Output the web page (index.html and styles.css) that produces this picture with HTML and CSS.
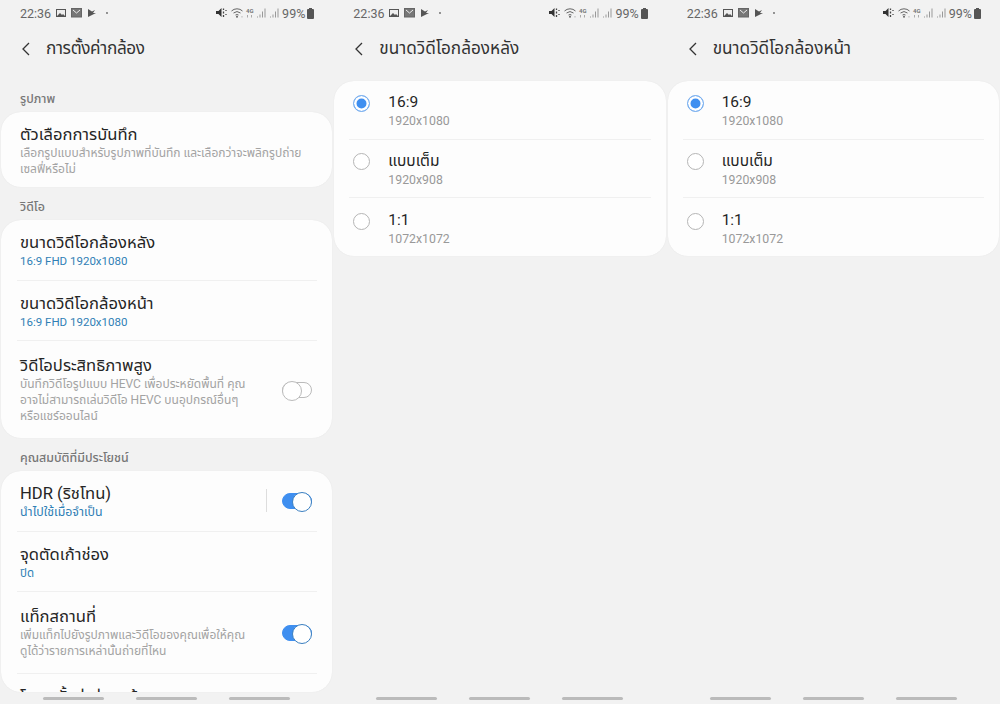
FILE: index.html
```html
<!DOCTYPE html>
<html lang="th">
<head>
    <meta charset="UTF-8">
    <title>การตั้งค่ากล้อง</title>
    <link rel="stylesheet" href="styles.css">
</head>
<body>
    <svg class="defs" width="0" height="0">
        <symbol id="ic-left" viewBox="0 0 54 10">
            <rect x="0.500" y="1.500" width="9" height="7" fill="#eee" stroke="#555"/>
            <path d="M1 8l3-3 2 2 1-1 2 2z" fill="#555"/>
            <rect x="15.500" y="0.500" width="10" height="8.500" fill="#777" stroke="#666"/>
            <path d="M17 2l3.500 3L24 2" fill="none" stroke="#eee"/>
            <path d="M32 1l4 2.500 3-1.500-2 3 3 0-8 4z" fill="#555"/>
            <circle cx="51" cy="5" r="0.900" fill="#666"/>
        </symbol>
        <symbol id="ic-right" viewBox="0 0 64 12">
            <path d="M0 4h2.500l3-3v9l-3-3H0z" fill="#333"/>
            <path d="M7.500 1.500v1.500M7.500 4.500v2M7.500 8v2M10 3v1M10 7v1" stroke="#444" stroke-width="1.300"/>
            <path d="M15.500 4a8 8 0 0 1 11 0M17.500 6a5.500 5.500 0 0 1 7 0M19.500 8a3 3 0 0 1 3 0" fill="none" stroke="#666"/>
            <circle cx="21" cy="9.800" r="1" fill="#666"/>
            <circle cx="26" cy="9.800" r="0.600" fill="#999"/>
            <text x="30" y="6" class="tiny">4G</text>
            <path d="M31.500 8v2.500M35.500 8v2.500" stroke="#aaa"/>
            <path d="M41.500 9.500v1M44 7.500v3M46.500 4.500v6M49 1.500v9M54.500 9.500v1M57 7.500v3M59.500 4.500v6M62 1.500v9" stroke="#999"/>
        </symbol>
        <symbol id="ic-back" viewBox="0 0 10 14">
            <path d="M8 1L2 7l6 6" fill="none" stroke="#333" stroke-width="1.300"/>
        </symbol>
    </svg>

    <main class="screens">
        <section class="phone">
            <div class="status">
                <span class="clock">22:36</span>
                <svg class="ic-notif"><use href="#ic-left"/></svg>
                <span class="spacer"></span>
                <svg class="ic-sys"><use href="#ic-right"/></svg>
                <span class="pct">99%</span>
                <span class="battery"></span>
            </div>
            <header class="head">
                <svg class="back"><use href="#ic-back"/></svg>
                <h1 class="tight">การตั้งค่ากล้อง</h1>
            </header>

            <h2 class="sec sec-first">รูปภาพ</h2>
            <div class="card">
                <div class="row row-one">
                    <div class="row-main">
                        <div class="name">ตัวเลือกการบันทึก</div>
                        <div class="desc">เลือกรูปแบบสำหรับรูปภาพที่บันทึก และเลือกว่าจะพลิกรูปถ่าย<br>เซลฟี่หรือไม่</div>
                    </div>
                </div>
            </div>

            <h2 class="sec">วิดีโอ</h2>
            <div class="card">
                <div class="row row-val">
                    <div class="row-main">
                        <div class="name">ขนาดวิดีโอกล้องหลัง</div>
                        <div class="val">16:9 FHD 1920x1080</div>
                    </div>
                </div>
                <div class="row row-val">
                    <div class="row-main">
                        <div class="name">ขนาดวิดีโอกล้องหน้า</div>
                        <div class="val">16:9 FHD 1920x1080</div>
                    </div>
                </div>
                <div class="row row-hevc">
                    <div class="row-main">
                        <div class="name">วิดีโอประสิทธิภาพสูง</div>
                        <div class="desc">บันทึกวิดีโอรูปแบบ HEVC เพื่อประหยัดพื้นที่ คุณ<br>อาจไม่สามารถเล่นวิดีโอ HEVC บนอุปกรณ์อื่นๆ<br>หรือแชร์ออนไลน์</div>
                    </div>
                    <span class="toggle"></span>
                </div>
            </div>

            <h2 class="sec">คุณสมบัติที่มีประโยชน์</h2>
            <div class="card card-cut">
                <div class="row row-val">
                    <div class="row-main">
                        <div class="name">HDR (ริชโทน)</div>
                        <div class="val val-th">นำไปใช้เมื่อจำเป็น</div>
                    </div>
                    <span class="vline"></span>
                    <span class="toggle on"></span>
                </div>
                <div class="row row-val">
                    <div class="row-main">
                        <div class="name">จุดตัดเก้าช่อง</div>
                        <div class="val">ปิด</div>
                    </div>
                </div>
                <div class="row row-tag">
                    <div class="row-main">
                        <div class="name">แท็กสถานที่</div>
                        <div class="desc">เพิ่มแท็กไปยังรูปภาพและวิดีโอของคุณเพื่อให้คุณ<br>ดูได้ว่ารายการเหล่านั้นถ่ายที่ไหน</div>
                    </div>
                    <span class="toggle on"></span>
                </div>
                <div class="row row-last">
                    <div class="name">โหมดตั้งค่าล่วงหน้า</div>
                </div>
            </div>
            <div class="nav"><span></span><span></span><span></span></div>
        </section>

        <section class="phone">
            <div class="status">
                <span class="clock">22:36</span>
                <svg class="ic-notif"><use href="#ic-left"/></svg>
                <span class="spacer"></span>
                <svg class="ic-sys"><use href="#ic-right"/></svg>
                <span class="pct">99%</span>
                <span class="battery"></span>
            </div>
            <header class="head">
                <svg class="back"><use href="#ic-back"/></svg>
                <h1>ขนาดวิดีโอกล้องหลัง</h1>
            </header>
            <div class="card card-radio">
                <div class="opt"><span class="radio on"></span><div><div class="opt-name">16:9</div><div class="opt-sub">1920x1080</div></div></div>
                <div class="opt"><span class="radio"></span><div><div class="opt-name">แบบเต็ม</div><div class="opt-sub">1920x908</div></div></div>
                <div class="opt"><span class="radio"></span><div><div class="opt-name">1:1</div><div class="opt-sub">1072x1072</div></div></div>
            </div>
            <div class="nav"><span></span><span></span><span></span></div>
        </section>

        <section class="phone">
            <div class="status">
                <span class="clock">22:36</span>
                <svg class="ic-notif"><use href="#ic-left"/></svg>
                <span class="spacer"></span>
                <svg class="ic-sys"><use href="#ic-right"/></svg>
                <span class="pct">99%</span>
                <span class="battery"></span>
            </div>
            <header class="head">
                <svg class="back"><use href="#ic-back"/></svg>
                <h1>ขนาดวิดีโอกล้องหน้า</h1>
            </header>
            <div class="card card-radio">
                <div class="opt"><span class="radio on"></span><div><div class="opt-name">16:9</div><div class="opt-sub">1920x1080</div></div></div>
                <div class="opt"><span class="radio"></span><div><div class="opt-name">แบบเต็ม</div><div class="opt-sub">1920x908</div></div></div>
                <div class="opt"><span class="radio"></span><div><div class="opt-name">1:1</div><div class="opt-sub">1072x1072</div></div></div>
            </div>
            <div class="nav"><span></span><span></span><span></span></div>
        </section>
    </main>
</body>
</html>
```

FILE: styles.css
```css
* { box-sizing: border-box; }
body { margin: 0; background: #f2f2f2; font-family: Roboto, "Noto Sans", "Noto Sans Thai", sans-serif; color: #252525; }
.defs { position: absolute; }
.screens { display: grid; grid-template-columns: repeat(3, 1fr); width: 1000px; height: 704px; overflow: hidden; }
.phone { position: relative; height: 704px; overflow: hidden; padding: 0 1px; }

.status { display: flex; align-items: center; height: 26px; padding: 0 18px 0 19px; color: #666; font-size: 12.500px; }
.clock { width: 36px; }
.ic-notif { width: 54px; height: 10px; flex: none; }
.spacer { flex: 1; }
.ic-sys { width: 64px; height: 12px; margin-right: 2px; flex: none; }
.tiny { font-size: 6px; font-weight: 700; fill: #777; }
.pct { font-size: 12.500px; }
.battery { position: relative; width: 7px; height: 10px; margin: 1px 0 0 2px; background: #555; border-radius: 1px; }
.battery::before { content: ""; position: absolute; left: 2px; top: -1px; width: 3px; height: 1px; background: #555; }

.head { display: flex; align-items: center; height: 45px; margin-bottom: 10px; padding-left: 20px; }
.back { width: 10px; height: 14px; margin-right: 15px; }
h1 { margin: 0; font-size: 17.200px; font-weight: 400; color: #333; }
h1.tight { letter-spacing: -0.350px; }

.sec { margin: 0; height: 33px; padding: 12px 0 0 19px; font-size: 12.400px; font-weight: 500; color: #777; line-height: 16px; }
.sec-first { height: 31px; padding-top: 10px; }

.card { background: #fdfdfd; border-radius: 20px; box-shadow: 0 0 1px #ddd; }
.card-cut { height: 221px; overflow: hidden; }
.card-radio { margin-top: 10px; height: 175px; }

.row { display: flex; align-items: center; margin: 0 15px 0 16px; padding: 0 5px 0 3px; border-bottom: 1px solid #f0f0f0; }
.row:last-child { border-bottom: 0; }
.row-one { height: 75px; }
.row-val { height: 60.500px; }
.row-hevc { height: 97px; }
.row-tag { height: 82px; }
.row-last { align-items: flex-start; height: 40px; padding-top: 12px; }
.row-main { flex: 1; min-width: 0; padding-top: 2px; }
.row-hevc .row-main, .row-tag .row-main { padding-top: 0; }
.row-hevc .name, .row-tag .name { line-height: 20px; }
.name { font-size: 16.600px; line-height: 21px; color: #252525; }
.val { font-size: 11.500px; line-height: 16px; color: #2f7fb5; }
.val-th { font-size: 12.400px; }
.desc { font-size: 12px; line-height: 16px; color: #a3a3a3; white-space: nowrap; }

.vline { width: 1px; height: 23px; margin-right: 15px; background: #ddd; }
.toggle { position: relative; flex: none; width: 30px; height: 16px; border: 1px solid #bbb; border-radius: 8px; background: #fff; }
.toggle::after { content: ""; position: absolute; left: -1px; top: -2px; width: 18px; height: 18px; border: 1px solid #bbb; border-radius: 50%; background: #fff; }
.toggle.on { background: #3f8ff0; border-color: #3f8ff0; }
.toggle.on::after { left: auto; right: -1px; border-color: #3b7fc0; }

.opt { display: flex; align-items: flex-start; height: 58.500px; margin: 0 15px; padding-top: 11px; border-bottom: 1px solid #f0f0f0; }
.opt:last-child { padding-top: 12px; border-bottom: 0; }
.radio { flex: none; width: 17px; height: 17px; margin: 2.500px 18px 0 4px; border: 1px solid #b5b5b5; border-radius: 50%; background: #fff; }
.radio.on { border-color: #7fb2ee; background: #3f8ff0; box-shadow: inset 0 0 0 2.500px #fff; }
.opt-name { font-size: 15.500px; line-height: 20px; color: #252525; }
.opt-sub { margin-top: 1px; font-size: 12.300px; line-height: 16px; color: #999; }

.nav { position: absolute; left: 0; right: 0; bottom: 4px; display: flex; justify-content: center; gap: 32px; }
.nav span { width: 61px; height: 3px; border-radius: 2px; background: #bbb; }
```
